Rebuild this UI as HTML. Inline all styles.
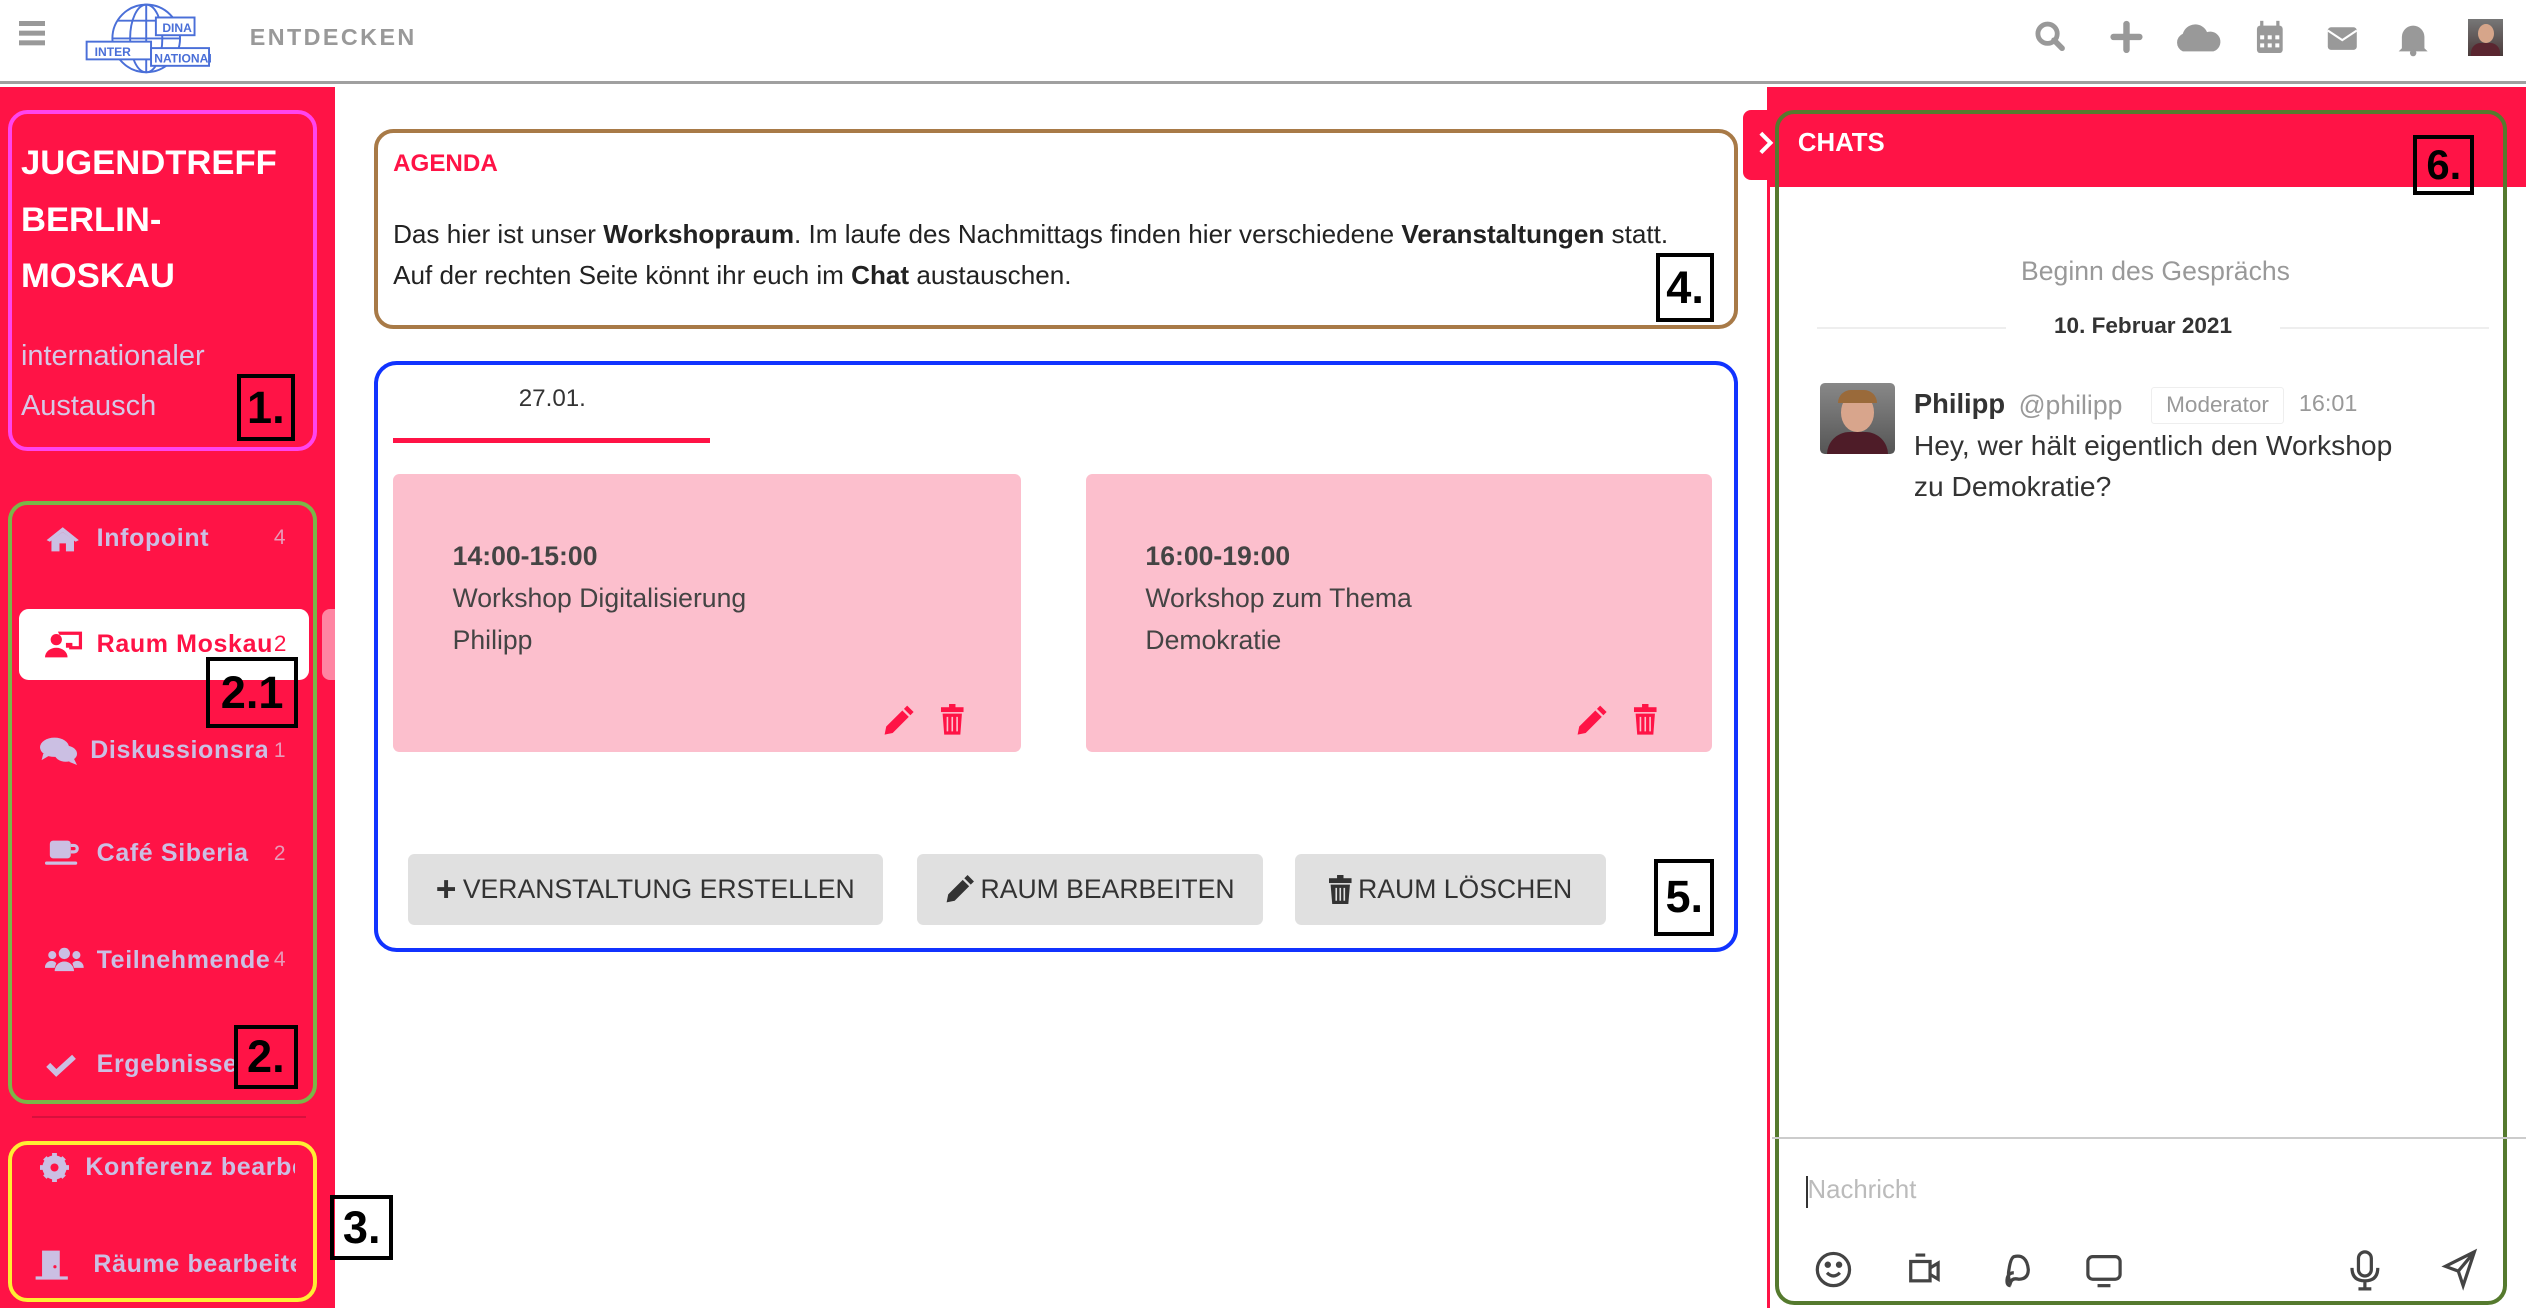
<!DOCTYPE html>
<html><head><meta charset="utf-8">
<style>
*{margin:0;padding:0;box-sizing:border-box}
html,body{width:2526px;height:1308px;overflow:hidden;background:#fff}
#w{zoom:1.611;width:1568px;height:812px;position:relative;font-family:"Liberation Sans",sans-serif;overflow:hidden}
.a{position:absolute}
.num{position:absolute;border:3px solid #000;font:bold 28px "Liberation Sans",sans-serif;color:#000;display:flex;align-items:center;justify-content:center;background:transparent}
.nav{position:absolute;left:12px;width:180px;height:44px;color:#cbbfe3;font-weight:bold;font-size:15.5px;letter-spacing:0.4px;display:flex;align-items:center}
.nav svg{position:absolute;left:16px}
.nav .t{position:absolute;left:48px;white-space:nowrap;overflow:hidden;width:112px}
.nav .c{position:absolute;left:158px;font-weight:normal;font-size:13px;color:#e89ab8}
.card{position:absolute;top:294px;width:390px;height:173px;background:#fcbfcd;border-radius:4px;color:#444;font-size:16.5px}
.btn{position:absolute;top:530px;height:44px;background:#e0e0e0;border-radius:4px;color:#333;font-size:16.5px;display:flex;align-items:center;justify-content:center;gap:4px}
</style></head><body><div id="w">
<!-- header -->
<div class="a" style="left:0;top:0;width:1568px;height:52px;background:#fff;border-bottom:2px solid #a0a0a0"></div>
<div class="a" style="left:12px;top:13px;width:16px;height:3px;background:#999;box-shadow:0 6px 0 #999,0 12px 0 #999"></div>
<svg class="a" style="left:53px;top:2px" width="78" height="46" viewBox="0 0 78 46">
<g fill="none" stroke="#4a6fd8" stroke-width="1.2">
<circle cx="38" cy="22" r="21"/><ellipse cx="38" cy="22" rx="10" ry="21"/><line x1="38" y1="1" x2="38" y2="43"/><line x1="17" y1="22" x2="59" y2="22"/><path d="M20 11h36M20 33h36"/>
<rect x="1" y="24" width="40" height="11" fill="#fff"/><rect x="44" y="9" width="24" height="11" fill="#fff"/><rect x="41" y="28" width="36" height="11" fill="#fff"/></g>
<g fill="#4a6fd8" font-family="Liberation Sans" font-size="7.5" font-weight="bold"><text x="6" y="33">INTER</text><text x="48" y="18">DINA</text><text x="43" y="37">NATIONAL</text></g></svg>
<div class="a" style="left:155px;top:15px;color:#999;font-weight:bold;font-size:14.5px;letter-spacing:1.5px">ENTDECKEN</div>
<svg class="a" style="left:1262px;top:10px" width="300" height="28" viewBox="0 0 300 28" fill="#999">
<circle cx="9" cy="11" r="6" fill="none" stroke="#999" stroke-width="3"/><path d="M13 15l5 5" stroke="#999" stroke-width="3.5" stroke-linecap="round"/>
<path d="M58 5v16M50 13h16" stroke="#999" stroke-width="4" stroke-linecap="round"/>
<path d="M93 22a6 6 0 0 1 0-11a8 8 0 0 1 15-1a6 6 0 0 1 4 12z"/>
<rect x="139" y="6" width="16" height="17" rx="2"/><rect x="141" y="3" width="2" height="5"/><rect x="151" y="3" width="2" height="5"/>
<g fill="#fff"><rect x="141" y="12" width="2.5" height="2.5"/><rect x="145.7" y="12" width="2.5" height="2.5"/><rect x="150.4" y="12" width="2.5" height="2.5"/><rect x="141" y="17" width="2.5" height="2.5"/><rect x="145.7" y="17" width="2.5" height="2.5"/><rect x="150.4" y="17" width="2.5" height="2.5"/></g>
<rect x="183" y="7" width="18" height="14" rx="2"/><path d="M183 9l9 6l9-6" stroke="#fff" stroke-width="1.3" fill="none"/>
<path d="M229 20v-7a7 7 0 0 1 14 0v7l2 2h-18z"/><circle cx="236" cy="23" r="2"/></svg>
<div class="a" style="left:1532px;top:12px;width:22px;height:23px;background:linear-gradient(#777,#4a3a3a);"><div class="a" style="left:6px;top:3px;width:10px;height:12px;border-radius:50%;background:#d6a58a"></div><div class="a" style="left:2px;top:15px;width:18px;height:8px;background:#5a2630;border-radius:6px 6px 0 0"></div></div>

<!-- sidebar -->
<div class="a" style="left:0;top:54px;width:208px;height:758px;background:#ff1346"></div>
<div class="a" style="left:5px;top:68px;width:192px;height:212px;border:3px solid #ff44ee;border-radius:12px"></div>
<div class="a" style="left:13px;top:84px;color:#fff;font-weight:bold;font-size:21.5px;line-height:35px">JUGENDTREFF<br>BERLIN-<br>MOSKAU</div>
<div class="a" style="left:13px;top:206px;color:#d6c8e6;font-size:18px;line-height:31px">internationaler<br>Austausch</div>
<div class="num" style="left:147px;top:232px;width:36px;height:42px">1.</div>
<div class="a" style="left:5px;top:311px;width:192px;height:374px;border:3px solid #7ab648;border-radius:12px"></div>
<div class="a" style="left:200px;top:378px;width:8px;height:44px;background:#ff85a2;border-radius:5px 0 0 5px"></div>
<div class="nav" style="top:312px"><svg width="22" height="18" viewBox="0 0 22 18" fill="#cbbfe3"><path d="M11 2L1 10l2 1 8-6 8 6 2-1z"/><path d="M4 10l7-5 7 5v7h-5v-5h-4v5H4z"/></svg><span class="t">Infopoint</span><span class="c">4</span></div>
<div class="nav" style="top:378px;background:#fff;border-radius:6px;color:#ff1346"><svg width="24" height="18" viewBox="0 0 24 18" fill="#ff1346"><circle cx="7" cy="6" r="3.5"/><path d="M0 17a7 6 0 0 1 14 0z"/><path d="M8 1h15v11h-8v-2h6V3H9z"/><rect x="13" y="8" width="4" height="3"/></svg><span class="t" style="width:110px">Raum Moskau</span><span class="c" style="color:#ff1346;font-size:14px">2</span></div>
<div class="nav" style="top:444px"><svg width="24" height="18" viewBox="0 0 24 18" fill="#cbbfe3" style="left:13px"><ellipse cx="9" cy="7" rx="9" ry="6"/><path d="M2 11l-1 4 5-3z"/><ellipse cx="16" cy="11" rx="7" ry="5"/><path d="M21 14l2 4-5-2z"/></svg><span class="t" style="left:44px;width:110px">Diskussionsraum</span><span class="c">1</span></div>
<div class="nav" style="top:508px"><svg width="22" height="18" viewBox="0 0 22 18" fill="#cbbfe3"><rect x="3" y="1" width="13" height="11" rx="2"/><path d="M16 3h2a3 3 0 0 1 0 6h-2v-2h2a1 1 0 0 0 0-2h-2z"/><rect x="0" y="14" width="20" height="2" rx="1"/></svg><span class="t">Café Siberia</span><span class="c">2</span></div>
<div class="nav" style="top:574px"><svg width="24" height="16" viewBox="0 0 24 16" fill="#cbbfe3"><circle cx="12" cy="4" r="3.5"/><circle cx="4.5" cy="5" r="2.5"/><circle cx="19.5" cy="5" r="2.5"/><path d="M6 15a6 6 0 0 1 12 0z"/><path d="M0 13a4 4 0 0 1 7-3l-1 3zM24 13a4 4 0 0 0-7-3l1 3z"/></svg><span class="t">Teilnehmende</span><span class="c">4</span></div>
<div class="nav" style="top:639px"><svg width="20" height="16" viewBox="0 0 20 16"><path d="M2 8l5 5L18 3" stroke="#cbbfe3" stroke-width="3.5" fill="none"/></svg><span class="t">Ergebnisse</span></div>
<div class="num" style="left:128px;top:408px;width:57px;height:44px">2.1</div>
<div class="num" style="left:145px;top:636px;width:40px;height:40px">2.</div>
<div class="a" style="left:20px;top:693px;width:170px;height:1px;background:#d8103d"></div>
<div class="a" style="left:5px;top:708px;width:192px;height:100px;border:3px solid #ffee33;border-radius:12px"></div>
<div class="nav" style="top:703px;left:8px"><svg width="18" height="18" viewBox="0 0 18 18" style="left:17px"><circle cx="9" cy="9" r="5.5" fill="none" stroke="#cbbfe3" stroke-width="4"/><path d="M9 0v18M0 9h18M3 3l12 12M15 3L3 15" stroke="#cbbfe3" stroke-width="3"/><circle cx="9" cy="9" r="2.5" fill="#ff1346"/></svg><span class="t" style="left:45px;width:130px">Konferenz bearbeiten</span></div>
<div class="nav" style="top:763px;left:8px"><svg width="22" height="20" viewBox="0 0 22 20" style="left:13px" fill="#cbbfe3"><rect x="5" y="1" width="11" height="17"/><rect x="1" y="17" width="20" height="2"/><circle cx="13" cy="11" r="1" fill="#ff1346"/></svg><span class="t" style="left:50px;width:126px">Räume bearbeiten</span></div>
<div class="num" style="left:205px;top:742px;width:39px;height:40px">3.</div>

<!-- agenda -->
<div class="a" style="left:232px;top:80px;width:847px;height:124px;border:3px solid #a87a47;border-radius:12px"></div>
<div class="a" style="left:244px;top:93px;color:#ff1346;font-weight:bold;font-size:15px">AGENDA</div>
<div class="a" style="left:244px;top:133px;color:#222;font-size:16.2px;line-height:25px;white-space:nowrap">Das hier ist unser <b>Workshopraum</b>. Im laufe des Nachmittags finden hier verschiedene <b>Veranstaltungen</b> statt.<br>Auf der rechten Seite könnt ihr euch im <b>Chat</b> austauschen.</div>
<div class="num" style="left:1028px;top:157px;width:36px;height:43px">4.</div>

<!-- events -->
<div class="a" style="left:232px;top:224px;width:847px;height:367px;border:3px solid #1133ff;border-radius:14px"></div>
<div class="a" style="left:322px;top:239px;color:#333;font-size:15px">27.01.</div>
<div class="a" style="left:244px;top:272px;width:197px;height:3px;background:#ff1346"></div>
<div class="card" style="left:244px"><div class="a" style="left:37px;top:39px;line-height:26px"><b>14:00-15:00</b><br>Workshop Digitalisierung<br>Philipp</div></div>
<div class="card" style="left:674px;width:389px"><div class="a" style="left:37px;top:39px;line-height:26px"><b>16:00-19:00</b><br>Workshop zum Thema<br>Demokratie</div></div>
<svg class="a" style="left:548px;top:437px" width="56" height="20" viewBox="0 0 56 20" fill="#ff1346"><path d="M1 19l1-5 10-10 4 4-10 10zM13 3l2-2 4 4-2 2z"/><rect x="36" y="2" width="14" height="3"/><rect x="41" y="0" width="4" height="3"/><path d="M37 6h12l-1 13h-10z"/><path d="M40 8v9M43 8v9M46 8v9" stroke="#fcbfcd" stroke-width="1"/></svg>
<svg class="a" style="left:978px;top:437px" width="56" height="20" viewBox="0 0 56 20" fill="#ff1346"><path d="M1 19l1-5 10-10 4 4-10 10zM13 3l2-2 4 4-2 2z"/><rect x="36" y="2" width="14" height="3"/><rect x="41" y="0" width="4" height="3"/><path d="M37 6h12l-1 13h-10z"/><path d="M40 8v9M43 8v9M46 8v9" stroke="#fcbfcd" stroke-width="1"/></svg>
<div class="btn" style="left:253px;width:295px"><span style="font-size:22px;font-weight:bold;line-height:1">+</span>VERANSTALTUNG ERSTELLEN</div>
<div class="btn" style="left:569px;width:215px"><svg width="18" height="18" viewBox="0 0 18 18" fill="#333"><path d="M1 17l1-5 9-9 4 4-9 9zM12 2l2-2 4 4-2 2z"/></svg>RAUM BEARBEITEN</div>
<div class="btn" style="left:804px;width:193px"><svg width="14" height="18" viewBox="0 0 14 18" fill="#333"><rect x="0" y="2" width="14" height="3"/><rect x="5" y="0" width="4" height="3"/><path d="M1 6h12l-1 12H2z"/><path d="M4.5 8v8M7 8v8M9.5 8v8" stroke="#e0e0e0" stroke-width="1"/></svg>RAUM LÖSCHEN</div>
<div class="num" style="left:1027px;top:533px;width:37px;height:48px">5.</div>

<!-- chat -->
<div class="a" style="left:1097px;top:54px;width:2px;height:758px;background:#ff1346"></div>
<div class="a" style="left:1099px;top:54px;width:469px;height:62px;background:#ff1346"></div>
<div class="a" style="left:1082px;top:68px;width:20px;height:44px;background:#ff1346;border-radius:5px 0 0 5px"></div>
<svg class="a" style="left:1090px;top:81px" width="12" height="16" viewBox="0 0 12 16"><path d="M3 2l6 6-6 6" stroke="#fff" stroke-width="2.5" fill="none"/></svg>
<div class="a" style="left:1116px;top:80px;color:#fff;font-weight:bold;font-size:16px">CHATS</div>
<div class="a" style="left:1102px;top:68px;width:454px;height:742px;border:3px solid #557a2e;border-radius:12px"></div>
<div class="num" style="left:1498px;top:84px;width:38px;height:37px;font-size:26px">6.</div>
<div class="a" style="left:1100px;top:159px;width:476px;text-align:center;color:#999;font-size:16.5px">Beginn des Gesprächs</div>
<div class="a" style="left:1128px;top:203px;width:117px;height:1px;background:#eee"></div>
<div class="a" style="left:1415px;top:203px;width:130px;height:1px;background:#eee"></div>
<div class="a" style="left:1275px;top:194px;color:#333;font-weight:bold;font-size:14px">10. Februar 2021</div>
<div class="a" style="left:1130px;top:238px;width:46px;height:44px;background:linear-gradient(#888,#555);border-radius:3px;overflow:hidden"><div class="a" style="left:13px;top:6px;width:20px;height:24px;border-radius:50%;background:#d8a58c"></div><div class="a" style="left:11px;top:4px;width:24px;height:8px;border-radius:10px 10px 0 0;background:#9a6a3a"></div><div class="a" style="left:4px;top:30px;width:38px;height:20px;border-radius:14px 14px 0 0;background:#4e1c28"></div></div>
<div class="a" style="left:1188px;top:241px;color:#333;font-weight:bold;font-size:17px">Philipp</div>
<div class="a" style="left:1253px;top:242px;color:#999;font-size:16.5px">@philipp</div>
<div class="a" style="left:1335px;top:240px;width:83px;height:23px;border:1px solid #eee;border-radius:2px;color:#999;font-size:14px;text-align:center;line-height:21px">Moderator</div>
<div class="a" style="left:1427px;top:242px;color:#999;font-size:14.5px">16:01</div>
<div class="a" style="left:1188px;top:264px;color:#333;font-size:17.5px;line-height:25px">Hey, wer hält eigentlich den Workshop<br>zu Demokratie?</div>
<div class="a" style="left:1100px;top:706px;width:468px;height:1px;background:#ccc"></div>
<div class="a" style="left:1121px;top:730px;width:1px;height:20px;background:#333"></div>
<div class="a" style="left:1122px;top:730px;color:#bbb;font-size:16px">Nachricht</div>
<svg class="a" style="left:1126px;top:774px" width="420" height="28" viewBox="0 0 420 28" fill="none" stroke="#444" stroke-width="2">
<circle cx="12" cy="14" r="10"/><circle cx="8.5" cy="11" r="1" fill="#444"/><circle cx="15.5" cy="11" r="1" fill="#444"/><path d="M8 16q4 4 8 0"/>
<rect x="60" y="9" width="12" height="12"/><path d="M72 13l5-3v10l-5-3M63 5h6"/>
<path d="M122 24q-3 0-2-5q1-3 4-3M124 6q8-2 9 8q0 6-6 6q-4-1-5 2q-2-3-1-8q1-7 3-8z"/>
<rect x="170" y="6" width="20" height="14" rx="3"/><path d="M176 24h8"/>
<rect x="338" y="3" width="8" height="15" rx="4"/><path d="M334 13q0 8 8 8q8 0 8-8M342 21v5M338 26h8"/>
<path d="M392 12l18-9-7 21-3-9z M400 15l10-12"/></svg>
</div></body></html>
